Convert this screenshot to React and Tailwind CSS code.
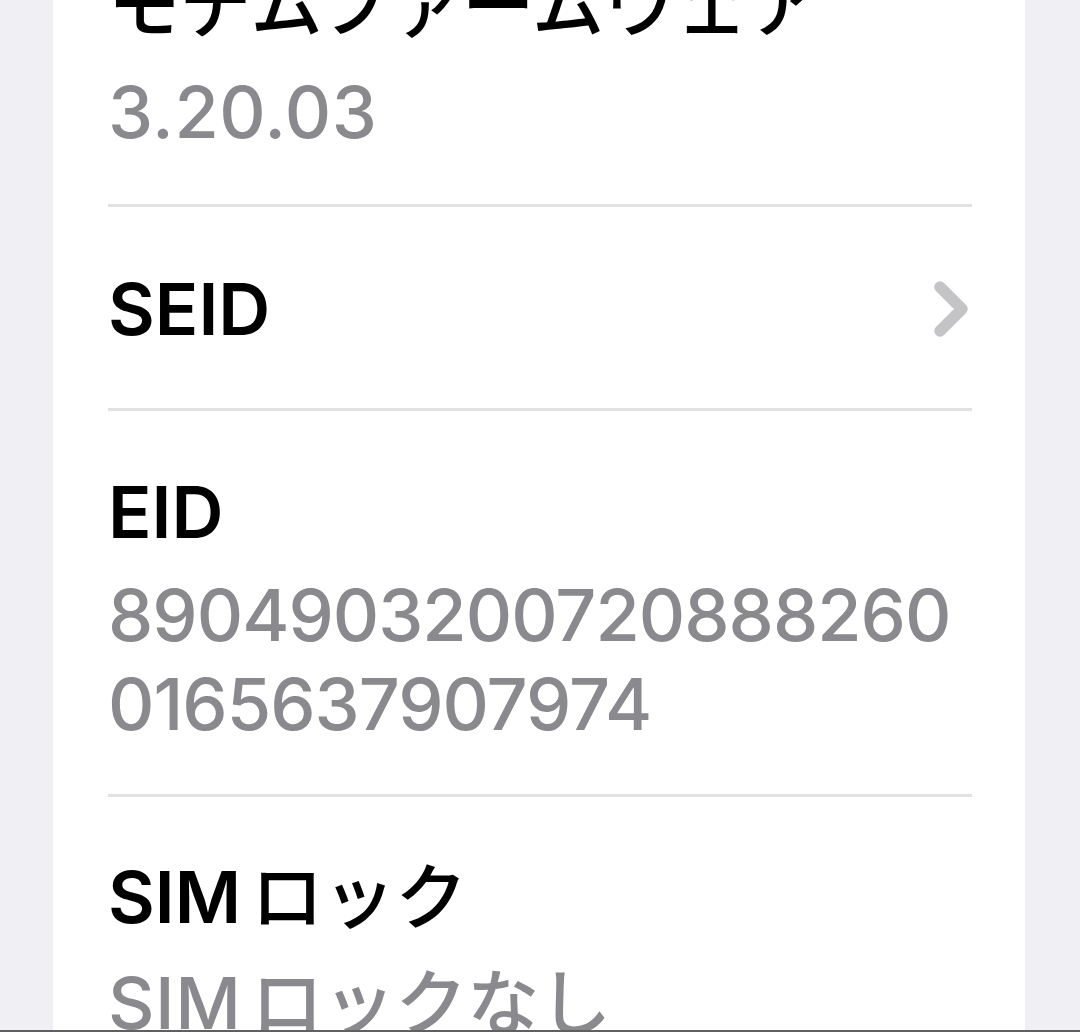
import React from "react";

// Chevron used for rows that drill down (SEID)
const Chevron = () => (
  <svg width="34" height="56" viewBox="0 0 34 56" fill="none" className="shrink-0 mr-[4px]">
    <path
      d="M6 6 L28 28 L6 50"
      stroke="#c4c4c7"
      strokeWidth="11.5"
      strokeLinecap="round"
      strokeLinejoin="round"
    />
  </svg>
);

// kana runs are set a bit lighter and spaced off the latin text before them
const Mixed = ({ text }) =>
  text
    .split(/([\u3040-\u30ff]+)/)
    .filter(Boolean)
    .map((part, i) =>
      /[\u3040-\u30ff]/.test(part) ? (
        <span key={i} className={`font-medium tracking-normal ${i > 0 ? "ml-[10px]" : ""}`}>
          {part}
        </span>
      ) : (
        <span key={i}>{part}</span>
      )
    );

const rows = [
  {
    label: "モデムファームウェア",
    value: ["3.20.03"],
    pad: "pt-[53px] pb-[48px]",
    gap: "mt-[18px]",
  },
  { label: "SEID", chevron: true, pad: "pt-[58px] pb-[55px]" },
  {
    label: "EID",
    value: ["8904903200720888260", "0165637907974"],
    pad: "pt-[57px] pb-[46px]",
    gap: "mt-[14px]",
    tight: true,
  },
  {
    label: "SIMロック",
    value: ["SIMロックなし"],
    pad: "pt-[56px] pb-[46px]",
    gap: "mt-[17px]",
    last: true,
  },
];

export default function App() {
  return (
    <div className="h-[1032px] flex flex-col overflow-hidden bg-[#f0eff4] font-['Inter','Noto_Sans_CJK_JP',sans-serif]">
      <div className="flex-1 min-h-0 overflow-hidden pl-[53px] pr-[55px]">
        <div className="-mt-[92px] bg-white">
          {rows.map((row) => (
            <div
              key={row.label}
              className={`ml-[55px] mr-[53px] ${row.pad} ${
                row.last ? "" : "border-b-[3px] border-[#e2e2e5]"
              }`}
            >
              <div className="flex items-center justify-between">
                <span className="text-[72px] leading-[88px] font-semibold text-black whitespace-nowrap">
                  <Mixed text={row.label} />
                </span>
                {row.chevron && <Chevron />}
              </div>
              {row.value && (
                <div
                  className={`${row.gap} text-[72px] leading-[89px] font-medium text-[#8a8a8e] whitespace-nowrap ${
                    row.tight ? "tracking-[-1px]" : "tracking-[0.5px]"
                  }`}
                >
                  {row.value.map((line) => (
                    <div key={line}>
                      <Mixed text={line} />
                    </div>
                  ))}
                </div>
              )}
            </div>
          ))}
        </div>
      </div>
      {/* dark edge at the bottom of the capture */}
      <div className="h-[2px] bg-[#5f5f5f]" />
    </div>
  );
}
